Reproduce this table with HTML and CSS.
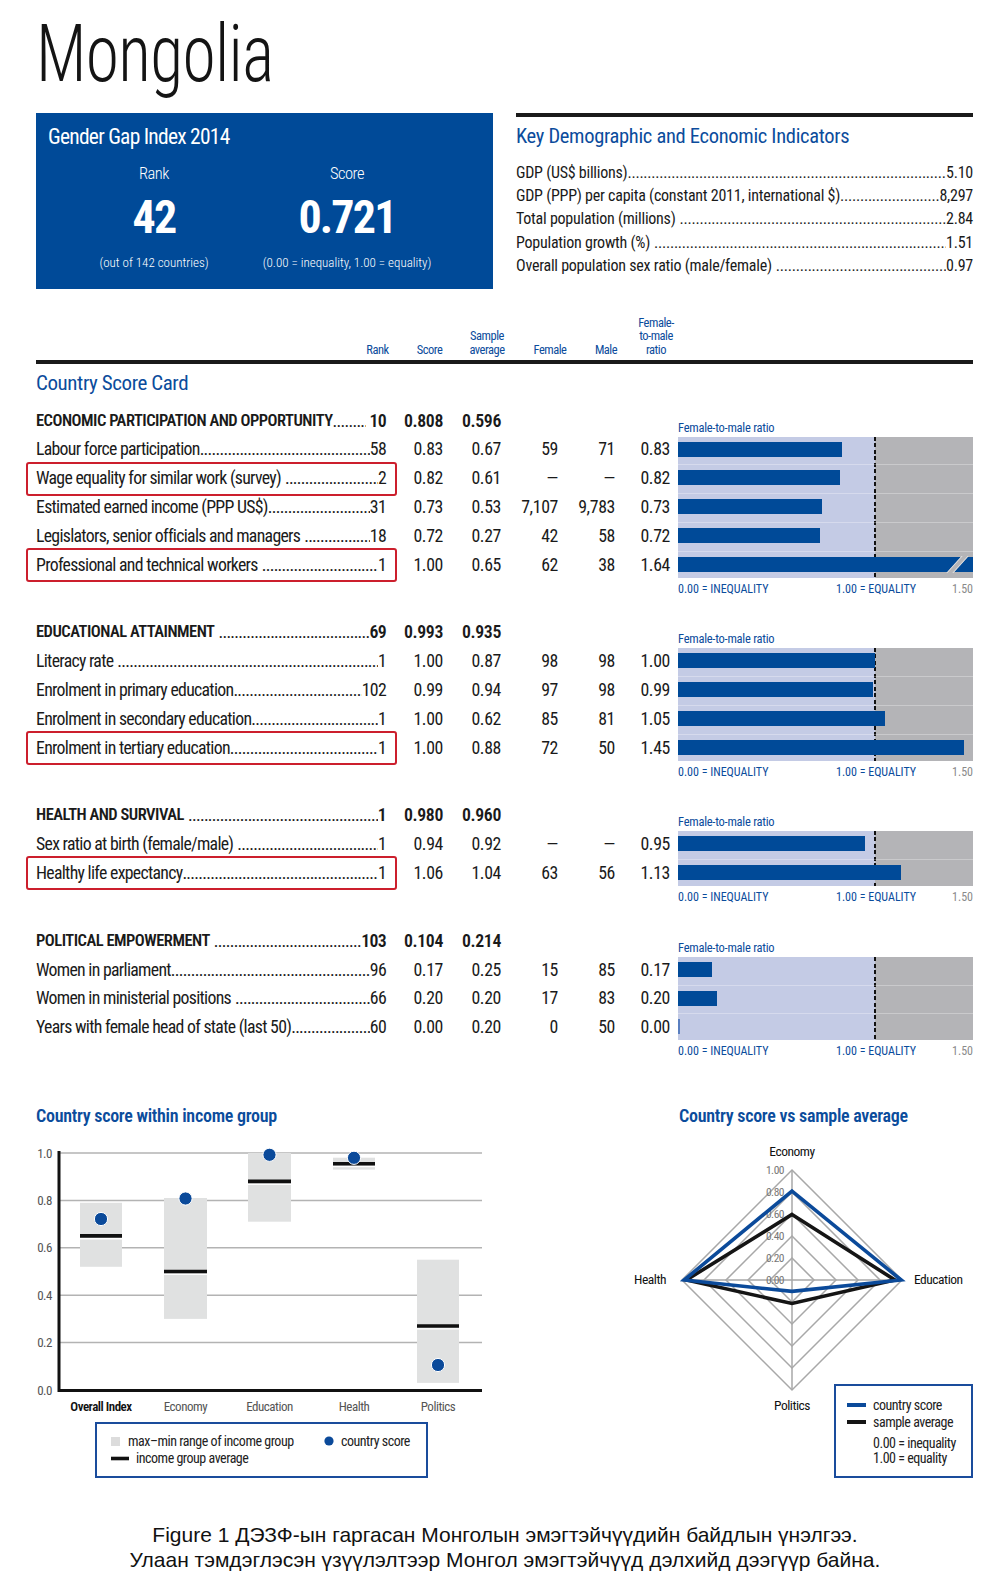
FILE: index.html
```html
<!DOCTYPE html>
<html lang="en">
<head>
<meta charset="utf-8">
<title>Mongolia – Gender Gap Index 2014</title>
<link rel="stylesheet" href="styles.css">
</head>
<body>
<div class="page">
  <h1 class="title">Mongolia</h1>

  <div class="top">
    <div class="ggi">
      <div class="ggi-title">Gender Gap Index 2014</div>
      <div class="ggi-cols">
        <div class="ggi-col c-rank">
          <div class="ggi-lbl">Rank</div>
          <div class="ggi-big">42</div>
          <div class="ggi-note">(out of 142 countries)</div>
        </div>
        <div class="ggi-col c-score">
          <div class="ggi-lbl">Score</div>
          <div class="ggi-big">0.721</div>
          <div class="ggi-note">(0.00 = inequality, 1.00 = equality)</div>
        </div>
      </div>
    </div>
    <div class="kdi">
      <h2 class="kdi-title">Key Demographic and Economic Indicators</h2>
      <div class="kdi-list">
        <div class="lrow"><span>GDP (US$ billions)</span><span class="dots"></span><span>5.10</span></div>
        <div class="lrow"><span>GDP (PPP) per capita (constant 2011, international $)</span><span class="dots"></span><span>8,297</span></div>
        <div class="lrow"><span class="sp">Total population (millions)</span><span class="dots"></span><span>2.84</span></div>
        <div class="lrow"><span class="sp">Population growth (%)</span><span class="dots"></span><span>1.51</span></div>
        <div class="lrow"><span class="sp">Overall population sex ratio (male/female)</span><span class="dots"></span><span>0.97</span></div>
      </div>
    </div>
  </div>

  <div class="colhead">
    <span></span>
    <span>Rank</span>
    <span>Score</span>
    <span>Sample<br>average</span>
    <span>Female</span>
    <span>Male</span>
    <span>Female-<br>to-male<br>ratio</span>
  </div>
  <div class="rule"></div>
  <h2 class="csc">Country Score Card</h2>

  <!-- Economic -->
  <section class="pillar first">
    <div class="ptable">
      <div class="prow head"><span class="lbl"><span class="name">ECONOMIC PARTICIPATION AND OPPORTUNITY</span><span class="dots"></span><span class="rank sp-l">10</span></span><span class="num">0.808</span><span class="num">0.596</span><span></span><span></span><span></span></div>
      <div class="prow"><span class="lbl"><span class="name">Labour force participation</span><span class="dots"></span><span class="rank">58</span></span><span class="num">0.83</span><span class="num">0.67</span><span class="num">59</span><span class="num">71</span><span class="num">0.83</span></div>
      <div class="prow"><span class="lbl hl"><span class="name sp">Wage equality for similar work (survey)</span><span class="dots"></span><span class="rank">2</span></span><span class="num">0.82</span><span class="num">0.61</span><span class="num">—</span><span class="num">—</span><span class="num">0.82</span></div>
      <div class="prow"><span class="lbl"><span class="name">Estimated earned income (PPP US$)</span><span class="dots"></span><span class="rank">31</span></span><span class="num">0.73</span><span class="num">0.53</span><span class="num">7,107</span><span class="num">9,783</span><span class="num">0.73</span></div>
      <div class="prow"><span class="lbl"><span class="name sp">Legislators, senior officials and managers</span><span class="dots"></span><span class="rank">18</span></span><span class="num">0.72</span><span class="num">0.27</span><span class="num">42</span><span class="num">58</span><span class="num">0.72</span></div>
      <div class="prow"><span class="lbl hl"><span class="name sp">Professional and technical workers</span><span class="dots"></span><span class="rank">1</span></span><span class="num">1.00</span><span class="num">0.65</span><span class="num">62</span><span class="num">38</span><span class="num">1.64</span></div>
    </div>
    <div class="pchart">
      <div class="clabel">Female-to-male ratio</div>
      <div class="cbox n5">
        <div class="crow"><div class="bar" style="width:163.5px"></div></div>
        <div class="crow"><div class="bar" style="width:161.5px"></div></div>
        <div class="crow"><div class="bar" style="width:143.8px"></div></div>
        <div class="crow"><div class="bar" style="width:141.8px"></div></div>
        <div class="crow"><div class="bar over" style="width:295px"><span class="brk"></span></div></div>
      </div>
      <div class="caxis"><span>0.00 = INEQUALITY</span><span>1.00 = EQUALITY</span><span class="max">1.50</span></div>
    </div>
  </section>

  <!-- Education -->
  <section class="pillar">
    <div class="ptable">
      <div class="prow head"><span class="lbl"><span class="name sp">EDUCATIONAL ATTAINMENT</span><span class="dots"></span><span class="rank">69</span></span><span class="num">0.993</span><span class="num">0.935</span><span></span><span></span><span></span></div>
      <div class="prow"><span class="lbl"><span class="name sp">Literacy rate</span><span class="dots"></span><span class="rank">1</span></span><span class="num">1.00</span><span class="num">0.87</span><span class="num">98</span><span class="num">98</span><span class="num">1.00</span></div>
      <div class="prow"><span class="lbl"><span class="name">Enrolment in primary education</span><span class="dots"></span><span class="rank">102</span></span><span class="num">0.99</span><span class="num">0.94</span><span class="num">97</span><span class="num">98</span><span class="num">0.99</span></div>
      <div class="prow"><span class="lbl"><span class="name">Enrolment in secondary education</span><span class="dots"></span><span class="rank">1</span></span><span class="num">1.00</span><span class="num">0.62</span><span class="num">85</span><span class="num">81</span><span class="num">1.05</span></div>
      <div class="prow"><span class="lbl hl"><span class="name">Enrolment in tertiary education</span><span class="dots"></span><span class="rank">1</span></span><span class="num">1.00</span><span class="num">0.88</span><span class="num">72</span><span class="num">50</span><span class="num">1.45</span></div>
    </div>
    <div class="pchart">
      <div class="clabel">Female-to-male ratio</div>
      <div class="cbox n4">
        <div class="crow"><div class="bar" style="width:197px"></div></div>
        <div class="crow"><div class="bar" style="width:195px"></div></div>
        <div class="crow"><div class="bar" style="width:206.9px"></div></div>
        <div class="crow"><div class="bar" style="width:285.7px"></div></div>
      </div>
      <div class="caxis"><span>0.00 = INEQUALITY</span><span>1.00 = EQUALITY</span><span class="max">1.50</span></div>
    </div>
  </section>

  <!-- Health -->
  <section class="pillar">
    <div class="ptable">
      <div class="prow head"><span class="lbl"><span class="name sp">HEALTH AND SURVIVAL</span><span class="dots"></span><span class="rank">1</span></span><span class="num">0.980</span><span class="num">0.960</span><span></span><span></span><span></span></div>
      <div class="prow"><span class="lbl"><span class="name sp">Sex ratio at birth (female/male)</span><span class="dots"></span><span class="rank">1</span></span><span class="num">0.94</span><span class="num">0.92</span><span class="num">—</span><span class="num">—</span><span class="num">0.95</span></div>
      <div class="prow"><span class="lbl hl"><span class="name">Healthy life expectancy</span><span class="dots"></span><span class="rank">1</span></span><span class="num">1.06</span><span class="num">1.04</span><span class="num">63</span><span class="num">56</span><span class="num">1.13</span></div>
    </div>
    <div class="pchart">
      <div class="clabel">Female-to-male ratio</div>
      <div class="cbox n2">
        <div class="crow"><div class="bar" style="width:187.2px"></div></div>
        <div class="crow"><div class="bar" style="width:222.6px"></div></div>
      </div>
      <div class="caxis"><span>0.00 = INEQUALITY</span><span>1.00 = EQUALITY</span><span class="max">1.50</span></div>
    </div>
  </section>

  <!-- Political -->
  <section class="pillar">
    <div class="ptable">
      <div class="prow head"><span class="lbl"><span class="name sp">POLITICAL EMPOWERMENT</span><span class="dots"></span><span class="rank">103</span></span><span class="num">0.104</span><span class="num">0.214</span><span></span><span></span><span></span></div>
      <div class="prow"><span class="lbl"><span class="name">Women in parliament</span><span class="dots"></span><span class="rank">96</span></span><span class="num">0.17</span><span class="num">0.25</span><span class="num">15</span><span class="num">85</span><span class="num">0.17</span></div>
      <div class="prow"><span class="lbl"><span class="name sp">Women in ministerial positions</span><span class="dots"></span><span class="rank">66</span></span><span class="num">0.20</span><span class="num">0.20</span><span class="num">17</span><span class="num">83</span><span class="num">0.20</span></div>
      <div class="prow"><span class="lbl"><span class="name">Years with female head of state (last 50)</span><span class="dots"></span><span class="rank">60</span></span><span class="num">0.00</span><span class="num">0.20</span><span class="num">0</span><span class="num">50</span><span class="num">0.00</span></div>
    </div>
    <div class="pchart">
      <div class="clabel">Female-to-male ratio</div>
      <div class="cbox n3">
        <div class="crow"><div class="bar" style="width:33.5px"></div></div>
        <div class="crow"><div class="bar" style="width:39.4px"></div></div>
        <div class="crow"><div class="bar zero" style="width:1.5px"></div></div>
      </div>
      <div class="caxis"><span>0.00 = INEQUALITY</span><span>1.00 = EQUALITY</span><span class="max">1.50</span></div>
    </div>
  </section>

  <div class="bottom">
    <div class="bcol">
      <h3 class="btitle t-left">Country score within income group</h3>
      <svg class="chart" width="500" height="360" viewBox="0 1130 500 360">
        <g stroke="#b3b3b3" stroke-width="1.5">
          <line x1="59" y1="1153" x2="482" y2="1153"/>
          <line x1="59" y1="1200.4" x2="482" y2="1200.4"/>
          <line x1="59" y1="1247.8" x2="482" y2="1247.8"/>
          <line x1="59" y1="1295.2" x2="482" y2="1295.2"/>
          <line x1="59" y1="1342.6" x2="482" y2="1342.6"/>
        </g>
        <g fill="#e0e1e1">
          <rect x="80" y="1202.8" width="42" height="64"/>
          <rect x="164" y="1198" width="43" height="120.9"/>
          <rect x="248" y="1153" width="43" height="68.7"/>
          <rect x="333" y="1157.7" width="42" height="11.9"/>
          <rect x="417" y="1259.7" width="42" height="123.2"/>
        </g>
        <g stroke="#ffffff" stroke-width="1.4">
          <line x1="80" y1="1238.8" x2="122" y2="1238.8"/>
          <line x1="164" y1="1274.4" x2="207" y2="1274.4"/>
          <line x1="248" y1="1184.3" x2="291" y2="1184.3"/>
          <line x1="333" y1="1166.6" x2="375" y2="1166.6"/>
          <line x1="417" y1="1328.9" x2="459" y2="1328.9"/>
        </g>
        <g stroke="#111" stroke-width="3.6">
          <line x1="80" y1="1235.9" x2="122" y2="1235.9"/>
          <line x1="164" y1="1271.5" x2="207" y2="1271.5"/>
          <line x1="248" y1="1181.4" x2="291" y2="1181.4"/>
          <line x1="333" y1="1163.7" x2="375" y2="1163.7"/>
          <line x1="417" y1="1326" x2="459" y2="1326"/>
        </g>
        <g fill="#0b4a9a" stroke="#ffffff" stroke-width="1">
          <circle cx="101" cy="1219" r="6.6"/>
          <circle cx="185.5" cy="1198.5" r="6.6"/>
          <circle cx="269.5" cy="1154.8" r="6.6"/>
          <circle cx="354" cy="1157.8" r="6.6"/>
          <circle cx="438" cy="1365" r="6.6"/>
        </g>
        <path d="M59 1151 V1390.5 H482" fill="none" stroke="#111" stroke-width="3"/>
        <g class="ylab" text-anchor="end">
          <text x="52" y="1157.5">1.0</text>
          <text x="52" y="1204.9">0.8</text>
          <text x="52" y="1252.3">0.6</text>
          <text x="52" y="1299.7">0.4</text>
          <text x="52" y="1347.1">0.2</text>
          <text x="52" y="1394.5">0.0</text>
        </g>
        <g class="xlab" text-anchor="middle">
          <text x="101" y="1411" class="strong">Overall Index</text>
          <text x="185.5" y="1411">Economy</text>
          <text x="269.5" y="1411">Education</text>
          <text x="354" y="1411">Health</text>
          <text x="438" y="1411">Politics</text>
        </g>
        <rect x="96" y="1423" width="331" height="54" fill="#fff" stroke="#1a4c9c" stroke-width="2"/>
        <rect x="111" y="1437" width="9" height="9" fill="#dcdcdc"/>
        <text class="leg" x="128" y="1446">max–min range of income group</text>
        <circle cx="329" cy="1441" r="4.6" fill="#0b4a9a"/>
        <text class="leg" x="341" y="1446">country score</text>
        <line x1="111" y1="1458.5" x2="129" y2="1458.5" stroke="#111" stroke-width="3.6"/>
        <text class="leg" x="136" y="1463">income group average</text>
      </svg>
    </div>
    <div class="bcol">
      <h3 class="btitle t-right">Country score vs sample average</h3>
      <svg class="chart" width="500" height="360" viewBox="500 1130 500 360">
        <g fill="none" stroke="#a8a8a8" stroke-width="1.5">
          <polygon points="792,1258 814,1280 792,1302 770,1280"/>
          <polygon points="792,1236 836,1280 792,1324 748,1280"/>
          <polygon points="792,1214 858,1280 792,1346 726,1280"/>
          <polygon points="792,1192 880,1280 792,1368 704,1280"/>
          <polygon points="792,1170 902,1280 792,1390 682,1280"/>
          <path d="M792 1170 V1390 M682 1280 H902"/>
        </g>
        <g class="tick" text-anchor="middle">
          <text x="775" y="1173.5">1.00</text>
          <text x="775" y="1195.5">0.80</text>
          <text x="775" y="1217.5">0.60</text>
          <text x="775" y="1239.5">0.40</text>
          <text x="775" y="1261.5">0.20</text>
          <text x="775" y="1283.5">0.00</text>
        </g>
        <polygon points="792,1214.4 894.9,1280 792,1303.5 686.4,1280" fill="none" stroke="#151515" stroke-width="3.6"/>
        <polygon points="792,1191.1 901.2,1280 792,1291.4 684.2,1280" fill="none" stroke="#0b4a9a" stroke-width="3.6"/>
        <g class="rlab">
          <text x="792" y="1156" text-anchor="middle">Economy</text>
          <text x="666" y="1284" text-anchor="end">Health</text>
          <text x="914" y="1284">Education</text>
          <text x="792" y="1410" text-anchor="middle">Politics</text>
        </g>
        <rect x="835" y="1385" width="137" height="92" fill="#fff" stroke="#1a4c9c" stroke-width="2"/>
        <line x1="847" y1="1405" x2="866" y2="1405" stroke="#0b4a9a" stroke-width="4"/>
        <text class="leg" x="873" y="1409.5">country score</text>
        <line x1="847" y1="1422" x2="866" y2="1422" stroke="#151515" stroke-width="4"/>
        <text class="leg" x="873" y="1426.5">sample average</text>
        <text class="leg" x="873" y="1448">0.00 = inequality</text>
        <text class="leg" x="873" y="1463">1.00 = equality</text>
      </svg>
    </div>
  </div>

  <p class="caption">Figure 1 ДЭЗФ-ын гаргасан Монголын эмэгтэйчүүдийн байдлын үнэлгээ.<br>Улаан тэмдэглэсэн үзүүлэлтээр Монгол эмэгтэйчүүд дэлхийд дээгүүр байна.</p>
</div>
</body>
</html>
```

FILE: styles.css
```css
* { box-sizing: border-box; }

body {
  margin: 0;
  background: #ffffff;
  font-family: "Roboto Condensed", "Roboto", sans-serif;
  font-stretch: condensed;
  letter-spacing: -0.03em;
  color: #1a1a1a;
}

.page {
  width: 1000px;
  padding-left: 36px;
}

/* ---------- title ---------- */
.title {
  margin: 0;
  padding-top: 14px;
  height: 94px;
  font-size: 80px;
  line-height: 80px;
  font-weight: 300;
  letter-spacing: -0.01em;
  color: #141414;
  transform: scaleX(0.845);
  transform-origin: 0 0;
  white-space: nowrap;
}

/* ---------- top row ---------- */
.top {
  display: flex;
  gap: 23px;
  margin-top: 19px;
}

.ggi {
  width: 457px;
  height: 176px;
  background: #004a98;
  color: #ffffff;
  padding-top: 12px;
}
.ggi-title {
  font-size: 21.5px;
  line-height: 24px;
  padding-left: 12px;
  letter-spacing: -0.035em;
}
.ggi-cols {
  display: flex;
  margin-top: 15.5px;
}
.ggi-col {
  display: flex;
  flex-direction: column;
  align-items: center;
}
.c-rank { width: 236px; }
.c-score { width: 150px; }
.ggi-lbl {
  font-size: 16.5px;
  line-height: 18px;
  font-weight: 300;
}
.ggi-big {
  font-size: 46px;
  line-height: 46px;
  font-weight: 700;
  margin-top: 11.7px;
  letter-spacing: -0.04em;
}
.ggi-note {
  font-size: 13px;
  line-height: 14px;
  margin-top: 15.6px;
  white-space: nowrap;
  font-weight: 300;
  letter-spacing: 0;
}

.kdi {
  width: 457px;
  border-top: 4px solid #1a1a1a;
}
.kdi-title {
  margin: 0;
  padding-top: 7px;
  font-size: 20.5px;
  line-height: 24px;
  font-weight: 400;
  letter-spacing: -0.015em;
  color: #0b4c9c;
}
.kdi-list { margin-top: 12.8px; }
.lrow {
  display: flex;
  font-size: 16px;
  line-height: 23.25px;
  height: 23.25px;
  letter-spacing: -0.015em;
  white-space: nowrap;
}

/* leader dots */
.dots {
  flex: 1;
  overflow: hidden;
  white-space: nowrap;
}
.dots::after {
  content: "........................................................................................................................................................................................................";
}
.sp { margin-right: 4px; }
.sp-l { margin-left: 4px; }

/* ---------- column header ---------- */
.colhead {
  display: grid;
  grid-template-columns: 321px 41px 63px 52px 74px 38px 62px;
  align-items: end;
  margin-top: 27.2px;
  font-size: 12.5px;
  line-height: 13.3px;
  text-align: center;
  color: #0b4c9c;
  white-space: nowrap;
}
.rule {
  width: 937px;
  height: 4px;
  margin-top: 4px;
  background: #1a1a1a;
}
.csc {
  margin: 6.7px 0 0;
  font-size: 21px;
  line-height: 24px;
  font-weight: 400;
  letter-spacing: -0.02em;
  color: #0b4c9c;
}

/* ---------- pillars ---------- */
.pillar {
  display: flex;
  align-items: flex-start;
  margin-top: 22.8px;
}
.pillar.first { margin-top: 11.8px; }

.ptable { width: 634px; }
.prow {
  display: grid;
  grid-template-columns: 350px 57px 58px 57px 57px 55px;
  height: 28.8px;
  font-size: 17.8px;
  line-height: 28.8px;
  letter-spacing: -0.04em;
  white-space: nowrap;
}
.num { text-align: right; letter-spacing: -0.02em; }
.lbl {
  display: flex;
  position: relative;
}
.prow.head .name {
  font-size: 16.5px;
  font-weight: 600;
  letter-spacing: -0.5px;
}
.prow.head .num,
.prow.head .rank { font-weight: 600; }

.hl::before {
  content: "";
  position: absolute;
  left: -10px;
  right: -11px;
  top: -2.6px;
  bottom: -2.7px;
  border: 2px solid #cc1f2d;
  border-radius: 3px;
}

.pchart {
  width: 295px;
  margin-left: 8px;
}
.clabel {
  padding-top: 14px;
  font-size: 12.5px;
  line-height: 14px;
  letter-spacing: -0.02em;
  color: #0b4c9c;
  white-space: nowrap;
}
.cbox {
  position: relative;
  margin-top: 2px;
  overflow: hidden;
  background: linear-gradient(to right, #c4cbe5 0, #c4cbe5 197px, #b4b4b7 197px, #b4b4b7 100%);
}
.cbox::before {
  content: "";
  position: absolute;
  left: 196px;
  top: 0;
  bottom: 0;
  width: 2px;
  background: repeating-linear-gradient(to bottom, #111 0, #111 4px, transparent 4px, transparent 6.5px);
  z-index: 0;
}
.cbox.n5 { height: 141px; }
.cbox.n4 { height: 112.2px; }
.cbox.n3 { height: 83.4px; }
.cbox.n2 { height: 54.6px; }

.crow {
  position: relative;
  z-index: 1;
  height: 28.8px;
  padding-top: 5px;
  border-bottom: 1px solid rgba(255, 255, 255, 0.3);
}
.bar {
  position: relative;
  height: 15px;
  background: #004a98;
}
.bar.zero { background: #5a7fc0; }
.brk {
  position: absolute;
  right: 12px;
  top: -1px;
  bottom: -1px;
  width: 7px;
  background: #b4b4b7;
  border-left: 1px solid #e6e6e6;
  border-right: 1px solid #e6e6e6;
  transform: skewX(-42deg);
}

.caxis {
  display: grid;
  grid-template-columns: 158px 1fr auto;
  margin-top: 4px;
  font-size: 12px;
  line-height: 14px;
  letter-spacing: 0;
  color: #0b4c9c;
  white-space: nowrap;
}
.caxis .max { color: #8a8a8a; }

/* ---------- bottom charts ---------- */
.bottom {
  display: flex;
  width: 1000px;
  margin-left: -36px;
}
.bcol { width: 500px; }
.btitle {
  margin: 48px 0 0;
  height: 20px;
  font-size: 18px;
  line-height: 20px;
  font-weight: 600;
  letter-spacing: -0.015em;
  color: #0b4c9c;
  white-space: nowrap;
}
.t-left { padding-left: 36px; }
.t-right { padding-left: 179px; }

.chart {
  display: block;
  margin-top: 4px;
}
.ylab { font-size: 13px; fill: #555555; }
.xlab { font-size: 13px; fill: #555555; }
.xlab .strong { fill: #111111; font-weight: 600; }
.tick { font-size: 11.5px; fill: #777777; }
.rlab { font-size: 13.5px; fill: #111111; }
.leg { font-size: 14px; fill: #222222; }

/* ---------- caption ---------- */
.caption {
  margin: 32px 0 0 -36px;
  width: 1000px;
  padding-left: 10px;
  font-family: "Liberation Sans", Arial, sans-serif;
  font-stretch: normal;
  letter-spacing: 0;
  font-size: 21px;
  line-height: 25px;
  text-align: center;
  color: #111111;
}
```
